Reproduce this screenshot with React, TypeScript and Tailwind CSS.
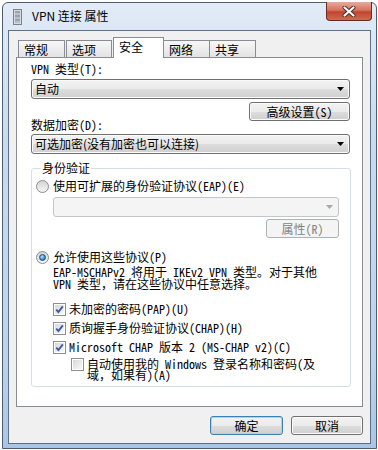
import React from "react";

// Windows 7 "VPN 连接 属性" dialog, Security tab.

const mono = "font-['Noto_Sans_Mono_CJK_SC','Noto_Sans_CJK_SC','Liberation_Mono',monospace]";
const sans = "font-['Noto_Sans_CJK_SC','Noto_Sans',sans-serif]";

const btnFace =
  "rounded-[3px] border border-[#707070] bg-[linear-gradient(to_bottom,#f2f2f2_0%,#ebebeb_50%,#dddddd_51%,#cfcfcf_100%)] shadow-[inset_0_0_0_1px_#fbfbfb]";

function Arrow({ color = "#000" }: { color?: string }) {
  return (
    <svg width="7" height="4" viewBox="0 0 7 4">
      <polygon points="0,0 7,0 3.5,4" fill={color} />
    </svg>
  );
}

function Combo({ value, disabled = false }: { value?: string; disabled?: boolean }) {
  return (
    <div
      className={`flex h-[20px] items-center justify-between pl-[3px] pr-[5px] ${
        disabled
          ? "rounded-[3px] border border-[#c3c6c9] bg-[#f4f4f4]"
          : btnFace
      }`}
    >
      <span className={`${sans} text-[12px] leading-[14px] text-black`}>{value}</span>
      <Arrow color={disabled ? "#a8a8a8" : "#000"} />
    </div>
  );
}

function Button({
  label,
  width,
  primary = false,
  disabled = false,
}: {
  label: string;
  width: string;
  primary?: boolean;
  disabled?: boolean;
}) {
  let face = btnFace;
  if (primary)
    face =
      "rounded-[3px] border border-[#3c7fb1] bg-[linear-gradient(to_bottom,#f2f2f2_0%,#ebebeb_50%,#dddddd_51%,#cfcfcf_100%)] shadow-[inset_0_0_0_1px_#9fd9f7]";
  if (disabled) face = "rounded-[3px] border border-[#adb2b5] bg-[#f4f4f4]";
  return (
    <div
      className={`${face} ${width} flex h-[19px] items-center justify-center ${mono} text-[12px] leading-[12px] ${
        disabled ? "text-[#838383]" : "text-black"
      }`}
    >
      {label}
    </div>
  );
}

function Radio({ checked = false }: { checked?: boolean }) {
  return (
    <div className="flex h-[13px] w-[13px] shrink-0 items-center justify-center rounded-full border border-[#8c8c8c] bg-[linear-gradient(to_bottom,#d4d4d4,#f6f6f6)]">
      {checked && (
        <div className="h-[7px] w-[7px] rounded-full border border-[#1e4f86] bg-[radial-gradient(circle_at_40%_35%,#bfe6fb_0%,#3c93e0_55%,#0f5aa6_100%)]" />
      )}
    </div>
  );
}

function Check({ checked = false }: { checked?: boolean }) {
  return (
    <div className="flex h-[13px] w-[13px] shrink-0 items-center justify-center border border-[#8f8f8f] bg-white p-[1px]">
      <div className="flex h-full w-full items-center justify-center bg-[linear-gradient(135deg,#d8d8d8,#f8f8f8)]">
        {checked && (
          <svg width="9" height="9" viewBox="0 0 9 9">
            <path d="M1.2 4.6 L3.4 7 L7.8 1.4" fill="none" stroke="#3e5aa3" strokeWidth="1.9" />
          </svg>
        )}
      </div>
    </div>
  );
}

function Tab({ label, cls, active = false }: { label: string; cls: string; active?: boolean }) {
  return (
    <div
      className={`${cls} ${sans} text-[12px] pl-[5px] border border-b-0 border-[#898c95] ${
        active
          ? "relative z-10 -mb-[1px] h-[21px] bg-white leading-[18px]"
          : "h-[17px] bg-[linear-gradient(to_bottom,#f7f7f7,#e3e3e3)] leading-[17px]"
      }`}
    >
      {label}
    </div>
  );
}

export default function App() {
  return (
    <div className="h-[450px] w-[378px] bg-white pl-[2px] pt-[2px]">
      <div className="flex h-[447px] w-[375px] flex-col rounded-t-[6px] border border-[#4d5d72] bg-[linear-gradient(to_bottom,#e2ebf6_0%,#c9dbef_30%,#bdd3ed_80%,#a9c5e6_100%)] pb-[4px]">
        {/* Title bar */}
        <div className="flex h-[28px] items-start pl-[10px] pr-[4px]">
          <svg className="mt-[6px]" width="9" height="16" viewBox="0 0 9 16">
            <rect x="0.5" y="0.5" width="8" height="15" fill="#d7dbe0" stroke="#7b838e" />
            <line x1="2" y1="3" x2="7" y2="3" stroke="#5d6b7c" />
            <line x1="2" y1="5" x2="7" y2="5" stroke="#9aa4b0" />
            <line x1="2" y1="7" x2="7" y2="7" stroke="#5d6b7c" />
            <line x1="2" y1="9" x2="7" y2="9" stroke="#9aa4b0" />
            <line x1="2" y1="11" x2="7" y2="11" stroke="#5d6b7c" />
            <line x1="2" y1="13" x2="7" y2="13" stroke="#9aa4b0" />
          </svg>
          <span className={`${sans} ml-[10px] mt-[5px] text-[12px] leading-[16px] text-black`}>
            VPN 连接 属性
          </span>
          <div className="flex-1" />
          <div className="-mt-[1px] flex h-[19px] w-[46px] items-center justify-center rounded-b-[4px] border border-t-0 border-[#6b2a22] bg-[linear-gradient(to_bottom,#e9a99b_0%,#d7745f_45%,#c2452e_55%,#cf6a4f_100%)]">
            <svg width="14" height="11" viewBox="0 0 14 11">
              <path d="M2.5 1.5 L11.5 9.5 M11.5 1.5 L2.5 9.5" stroke="#4a2a24" strokeWidth="4" strokeLinecap="round" />
              <path d="M2.5 1.5 L11.5 9.5 M11.5 1.5 L2.5 9.5" stroke="#ffffff" strokeWidth="2.2" strokeLinecap="round" />
            </svg>
          </div>
        </div>

        {/* Client area */}
        <div className="mx-[5px] flex flex-1 flex-col border border-[#5e7088] bg-[#f0f0f0] px-[7px] pb-[8px] pt-[6px]">
          {/* Tabs */}
          <div className="flex h-[20px] items-end">
            <Tab label="常规" cls="ml-[2px] w-[47px]" />
            <Tab label="选项" cls="ml-[1px] w-[46px]" />
            <Tab label="安全" cls="ml-[1px] w-[51px]" active />
            <Tab label="网络" cls="-ml-[1px] w-[47px]" />
            <Tab label="共享" cls="-ml-[1px] w-[47px]" />
          </div>

          {/* Panel */}
          <div className={`flex h-[350px] flex-col border border-[#898c95] bg-white pl-[14px] pr-[12px] pt-[5px] ${mono} text-[12px] leading-[12px] text-black`}>
            <div>VPN 类型(T):</div>
            <div className="mt-[4px]">
              <Combo value="自动" />
            </div>
            <div className="mt-[3px] flex justify-end">
              <Button label="高级设置(S)" width="w-[101px]" />
            </div>
            <div className="-mt-[2px]">数据加密(D):</div>
            <div className="mt-[3px]">
              <Combo value="可选加密(没有加密也可以连接)" />
            </div>

            <fieldset className="mt-[8px] -mr-[1px] rounded-[3px] border border-[#d5dfe5] pb-[6px] pl-[4px] pr-[11px]">
              <legend className="ml-[5px] px-[1px] leading-[12px]">身份验证</legend>
              <div className="mt-[5px] flex h-[14px] items-center">
                <Radio />
                <span className="ml-[4px]">使用可扩展的身份验证协议(EAP)(E)</span>
              </div>
              <div className="ml-[17px] mt-[4px]">
                <Combo disabled />
                <div className="mt-[2px] flex justify-end">
                  <Button label="属性(R)" width="w-[73px]" disabled />
                </div>
              </div>
              <div className="mt-[12px] flex h-[14px] items-center">
                <Radio checked />
                <span className="ml-[4px]">允许使用这些协议(P)</span>
              </div>
              <div className="ml-[17px] mt-[2px] leading-[12px]">
                <div>EAP-MSCHAPv2 将用于 IKEv2 VPN 类型。对于其他</div>
                <div>VPN 类型，请在这些协议中任意选择。</div>
              </div>
              <div className="ml-[17px] mt-[12px] flex h-[14px] items-center">
                <Check checked />
                <span className="ml-[3px]">未加密的密码(PAP)(U)</span>
              </div>
              <div className="ml-[17px] mt-[5px] flex h-[14px] items-center">
                <Check checked />
                <span className="ml-[3px]">质询握手身份验证协议(CHAP)(H)</span>
              </div>
              <div className="ml-[17px] mt-[5px] flex h-[14px] items-center">
                <Check checked />
                <span className="ml-[3px]">Microsoft CHAP 版本 2 (MS-CHAP v2)(C)</span>
              </div>
              <div className="ml-[35px] mt-[4px] flex items-start">
                <Check />
                <div className="ml-[3px] leading-[11px]">
                  <div>自动使用我的 Windows 登录名称和密码(及</div>
                  <div>域，如果有)(A)</div>
                </div>
              </div>
            </fieldset>
          </div>

          {/* Dialog buttons */}
          <div className="mt-[9px] flex justify-end gap-[8px]">
            <Button label="确定" width="w-[73px]" primary />
            <Button label="取消" width="w-[72px]" />
          </div>
        </div>
      </div>
    </div>
  );
}
